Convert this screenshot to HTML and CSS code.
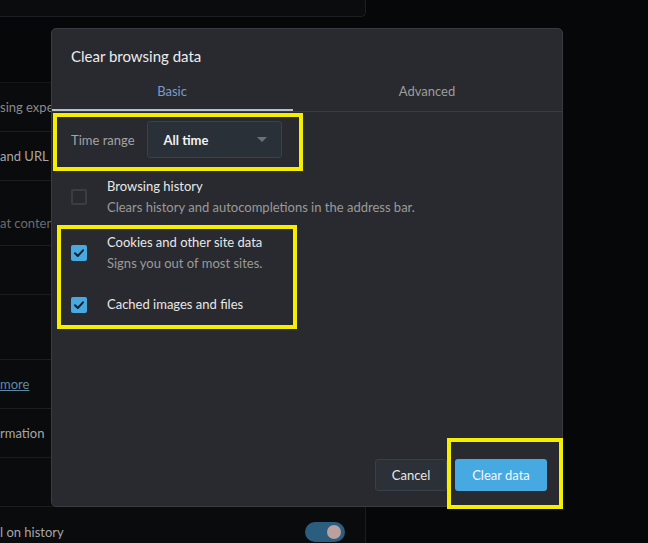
FILE: index.html
```html
<!DOCTYPE html>
<html lang="en">
<head>
<meta charset="utf-8">
<title>Clear browsing data</title>
<link rel="stylesheet" href="styles.css">
</head>
<body>
<div class="page">
  <div class="top-card"></div>
  <div class="section">
    <div class="row h50"><span class="bg-text dim">sing experience</span></div>
    <div class="row h49"><span class="bg-text">and URL</span></div>
    <div class="row h65 bottom"><span class="bg-text faint">at content</span></div>
    <div class="row h49"></div>
    <div class="row h65"></div>
    <div class="row h49"><a class="bg-link">more</a></div>
    <div class="row h49"><span class="bg-text">rmation</span></div>
    <div class="row h49"></div>
    <div class="row last">
      <span class="bg-text">l on history</span>
      <span class="toggle"><span class="knob"></span></span>
    </div>
  </div>
</div>

<div class="dialog">
  <div class="dialog-title">Clear browsing data</div>
  <div class="tabs">
    <div class="tab active">Basic</div>
    <div class="tab">Advanced</div>
  </div>
  <div class="range-row">
    <span class="range-label">Time range</span>
    <div class="select">
      <span class="select-value">All time</span>
      <span class="caret"></span>
    </div>
  </div>
  <div class="options">
    <div class="option">
      <span class="checkbox"></span>
      <div class="option-text">
        <div class="option-title">Browsing history</div>
        <div class="option-sub">Clears history and autocompletions in the address bar.</div>
      </div>
    </div>
    <div class="option">
      <span class="checkbox checked"><svg viewBox="0 0 16 16" width="16" height="16"><path d="M4 8.3 L6.8 11 L12 5.3" fill="none" stroke="#14202b" stroke-width="2" stroke-linecap="round" stroke-linejoin="round"/></svg></span>
      <div class="option-text">
        <div class="option-title">Cookies and other site data</div>
        <div class="option-sub">Signs you out of most sites.</div>
      </div>
    </div>
    <div class="option single">
      <span class="checkbox checked"><svg viewBox="0 0 16 16" width="16" height="16"><path d="M4 8.3 L6.8 11 L12 5.3" fill="none" stroke="#14202b" stroke-width="2" stroke-linecap="round" stroke-linejoin="round"/></svg></span>
      <div class="option-text">
        <div class="option-title">Cached images and files</div>
      </div>
    </div>
  </div>
  <div class="footer">
    <button class="btn btn-cancel">Cancel</button>
    <button class="btn btn-primary">Clear data</button>
  </div>
</div>

<div class="mark mark-range"></div>
<div class="mark mark-options"></div>
<div class="mark mark-button"></div>
</body>
</html>
```

FILE: styles.css
```css
html, body {
  margin: 0;
  padding: 0;
}
body {
  width: 648px;
  height: 543px;
  overflow: hidden;
  position: relative;
  background: #060709;
  font-family: "Lato", "Noto Sans", sans-serif;
  font-size: 13px;
  color: #e6e6e6;
}

/* background settings page */
.page {
  width: 366px;
}
.top-card {
  height: 17px;
  box-sizing: border-box;
  background: #0b0c0e;
  border-right: 1px solid #1e1f23;
  border-bottom: 1px solid #1e1f23;
  border-bottom-right-radius: 5px;
}
.section {
  margin-top: 65px;
  background: #0a0b0d;
  border-top: 1px solid #15161a;
  border-right: 1px solid #1b1c20;
  box-sizing: border-box;
}
.row {
  box-sizing: border-box;
  display: flex;
  align-items: center;
  border-bottom: 1px solid #1c1d21;
  line-height: 20px;
  overflow: hidden;
  white-space: nowrap;
}
.h50 { height: 49px; }
.h49 { height: 49px; }
.h65 { height: 65px; }
.row.bottom {
  align-items: flex-end;
  padding-bottom: 12px;
}
.row.last {
  height: 60px;
  border-bottom: none;
  justify-content: space-between;
  align-items: flex-start;
  padding-top: 15px;
  padding-right: 20px;
}
.bg-text {
  color: #a6a6a6;
  font-size: 13px;
}
.bg-text.dim { color: #8a8a8a; }
.bg-text.faint { color: #6c6c6c; }
.bg-link {
  color: #5f8aa6;
  text-decoration: underline;
}
.toggle {
  position: relative;
  width: 40px;
  height: 20px;
  border-radius: 10px;
  background: #2b5e7e;
}
.knob {
  position: absolute;
  right: 4px;
  top: 3px;
  width: 14px;
  height: 14px;
  border-radius: 50%;
  background: #bca0a0;
}

/* dialog */
.dialog {
  position: absolute;
  left: 51px;
  top: 28px;
  width: 512px;
  height: 479px;
  box-sizing: border-box;
  background: #292a2f;
  border: 1px solid #3a3b40;
  border-radius: 5px;
  display: flex;
  flex-direction: column;
}
.dialog-title {
  padding: 17px 19px 0;
  font-size: 15px;
  line-height: 20px;
  color: #ececec;
}
.tabs {
  margin-top: 6px;
  display: flex;
  border-bottom: 1px solid #3b3c41;
}
.tab {
  position: relative;
  flex: 1;
  height: 39px;
  line-height: 39px;
  padding-right: 15px;
  text-align: center;
  color: #9c9c9c;
  font-size: 13px;
}
.tab.active {
  color: #7c9bcb;
}
.tab.active::after {
  content: "";
  position: absolute;
  left: 0;
  right: 14px;
  bottom: 0;
  height: 2px;
  background: #b9c1c8;
}
.range-row {
  margin-top: 9px;
  padding-left: 19px;
  display: flex;
  align-items: center;
  gap: 12px;
}
.range-label {
  color: #a3a3a3;
}
.select {
  width: 135px;
  height: 37px;
  box-sizing: border-box;
  background: #2a3037;
  border: 1px solid #3a4149;
  border-radius: 3px;
  display: flex;
  align-items: center;
  justify-content: space-between;
  padding: 0 14px 0 16px;
}
.select-value {
  color: #f2f2f2;
  font-weight: 700;
}
.caret {
  width: 0;
  height: 0;
  border-left: 5px solid transparent;
  border-right: 5px solid transparent;
  border-top: 5px solid #6b7178;
}
.options {
  margin-top: 11px;
}
.option {
  display: flex;
  align-items: center;
  gap: 20px;
  padding: 7px 19px;
  line-height: 21px;
}
.option.single {
  padding-top: 13px;
  padding-bottom: 13px;
}
.checkbox {
  flex: none;
  width: 16px;
  height: 16px;
  box-sizing: border-box;
  border: 2px solid #3c3d42;
  border-radius: 2px;
}
.checkbox.checked {
  border: none;
  background: #48a9e1;
}
.checkbox svg {
  display: block;
}
.option-title {
  color: #e8e8e8;
}
.option-sub {
  color: #9a9a9a;
}
.footer {
  margin-top: auto;
  display: flex;
  justify-content: flex-end;
  gap: 8px;
  padding: 0 15px 15px;
}
.btn {
  height: 32px;
  box-sizing: border-box;
  border-radius: 3px;
  font-family: inherit;
  font-size: 13px;
  cursor: pointer;
}
.btn-cancel {
  width: 72px;
  background: #2b3137;
  border: 1px solid #394047;
  color: #e6e6e6;
}
.btn-primary {
  width: 92px;
  background: #47a9e1;
  border: none;
  color: #f3f8fc;
}

/* yellow annotation frames */
.mark {
  position: absolute;
  box-sizing: border-box;
  border: 4px solid #f6ee00;
}
.mark-range {
  left: 53px;
  top: 113px;
  width: 250px;
  height: 58px;
}
.mark-options {
  left: 57px;
  top: 225px;
  width: 240px;
  height: 104px;
}
.mark-button {
  left: 447px;
  top: 438px;
  width: 116px;
  height: 71px;
}
```
